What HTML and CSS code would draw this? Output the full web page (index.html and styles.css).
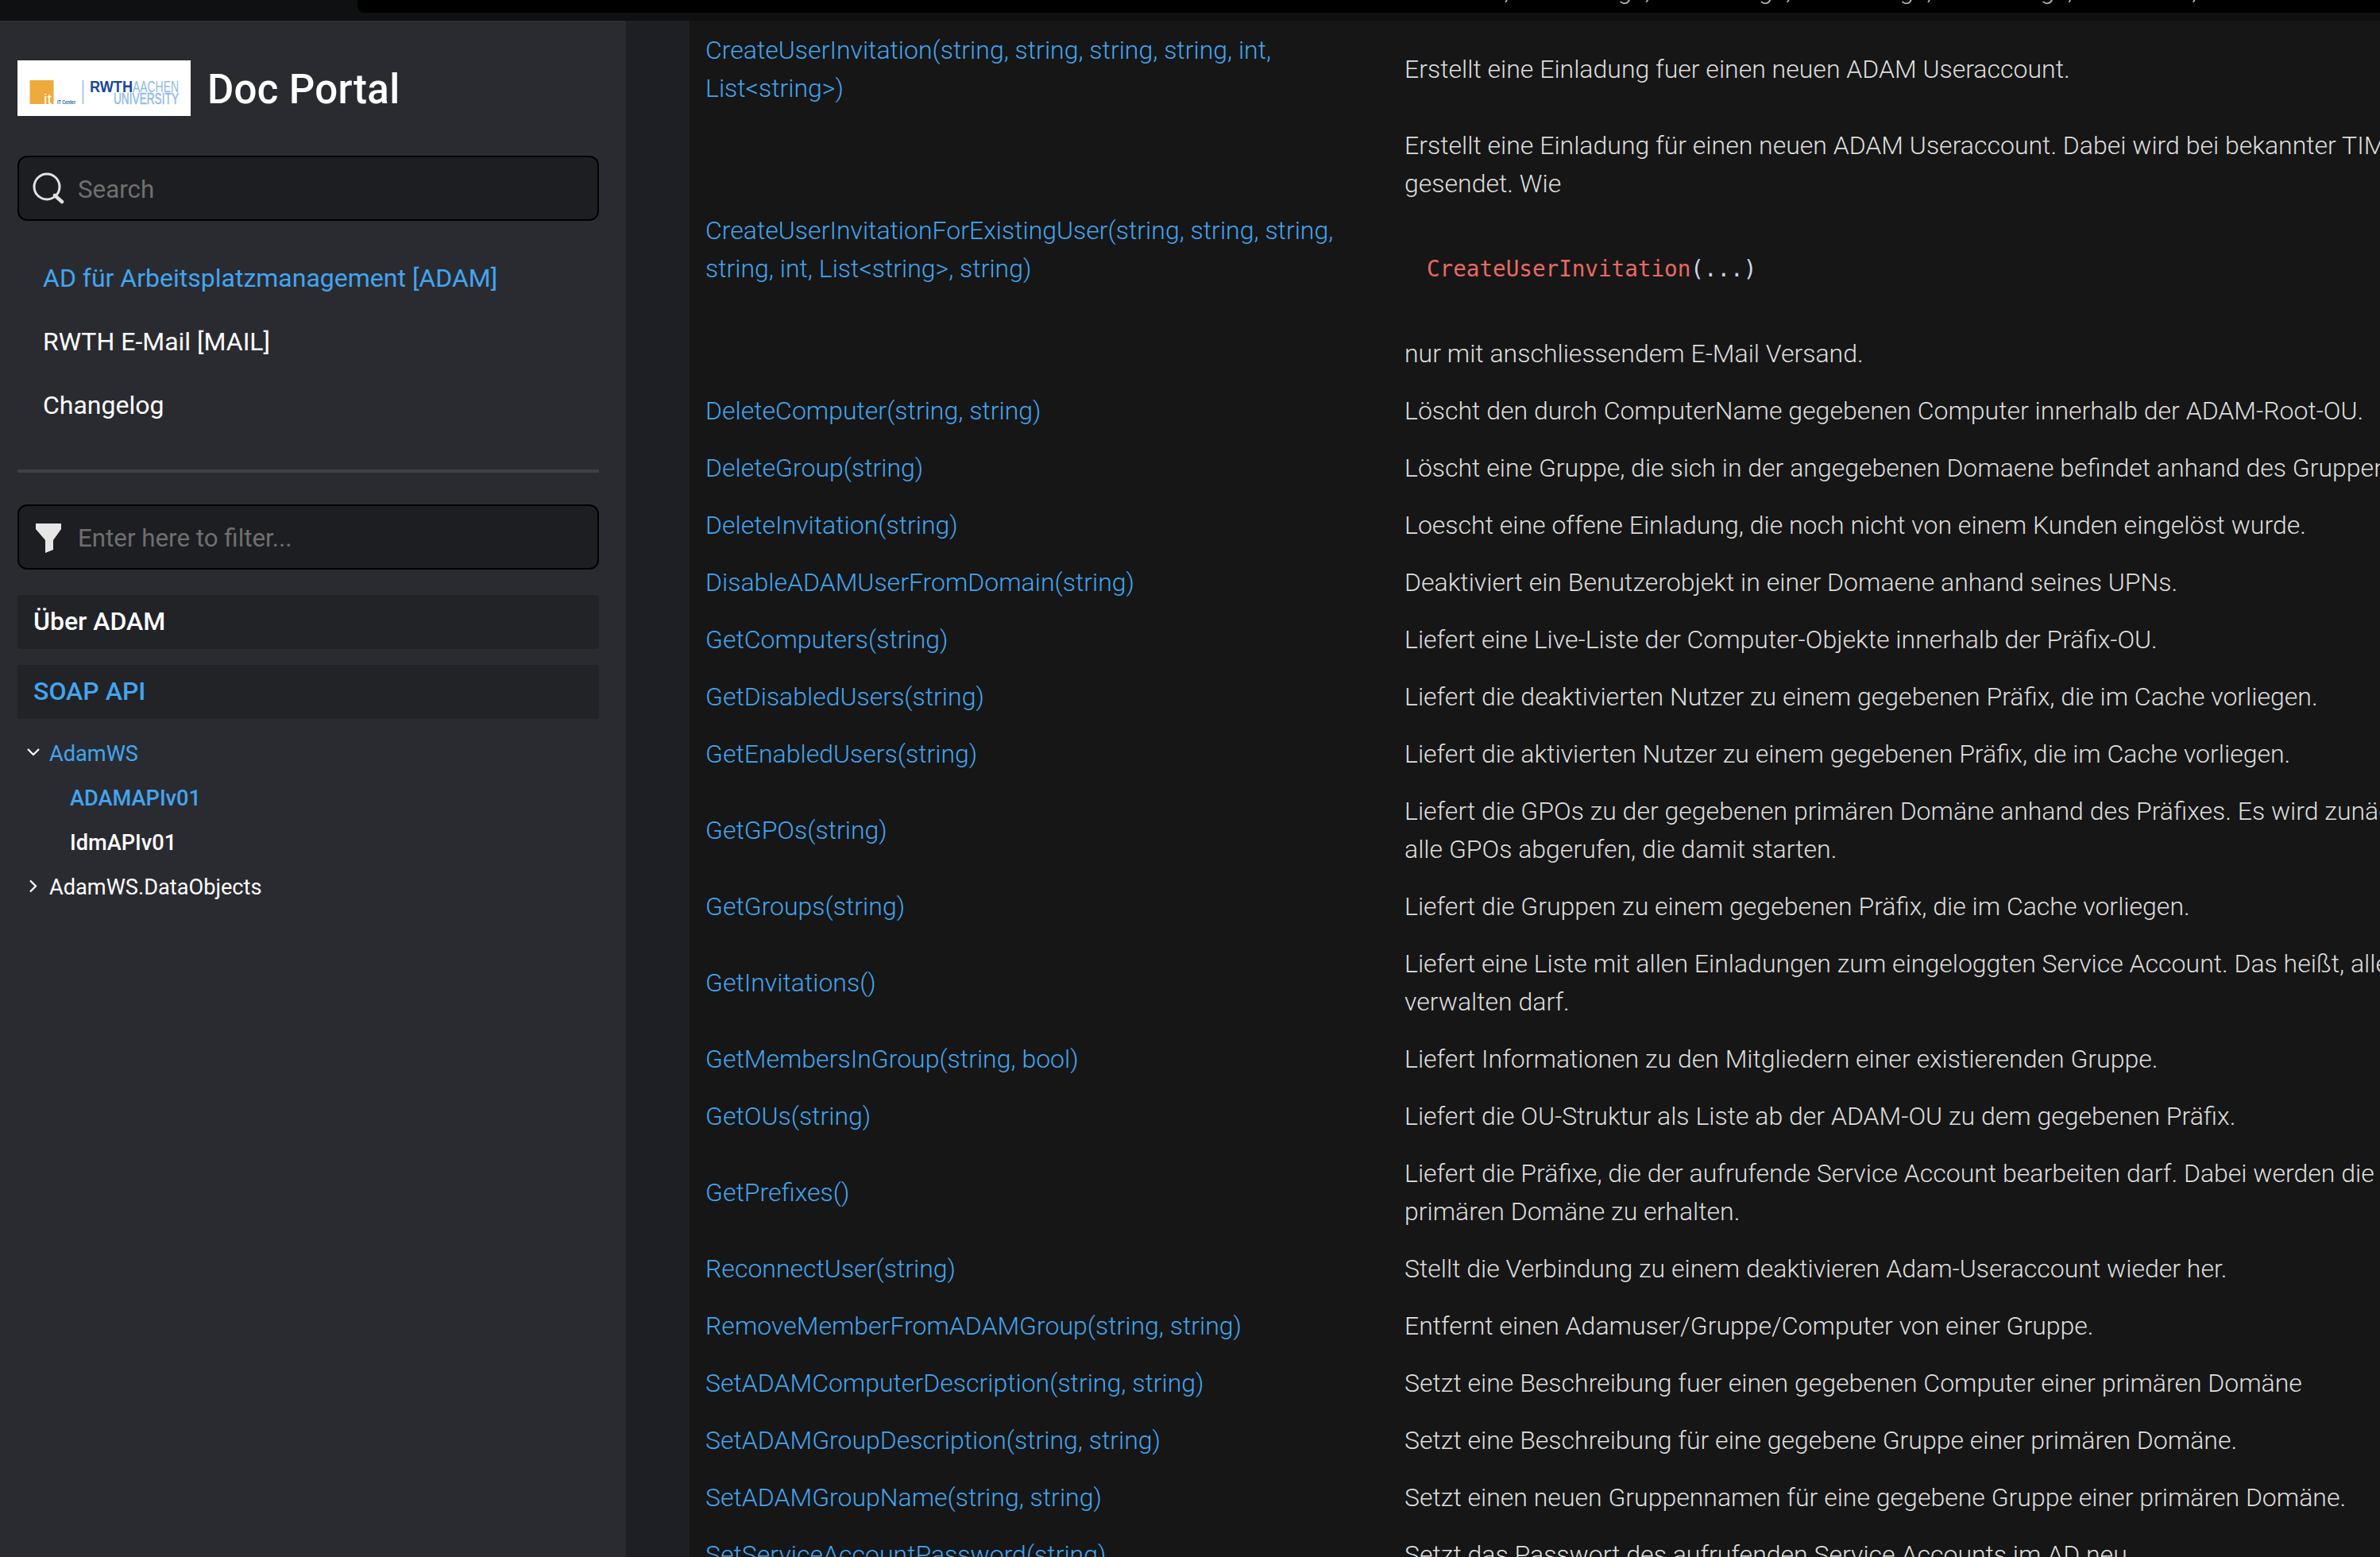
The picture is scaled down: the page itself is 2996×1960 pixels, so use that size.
FILE: index.html
```html
<!DOCTYPE html>
<html lang="de">
<head>
<meta charset="utf-8">
<title>Doc Portal</title>
<link rel="stylesheet" href="styles.css">
</head>
<body>
<header class="topbar">
  <div class="topbox"><div class="topbox-text">Hashtable, List&lt;string&gt;, List&lt;string&gt;, List&lt;string&gt;, List&lt;string&gt;, Hashtable,</div></div>
</header>
<div class="layout">
  <aside class="sidebar">
    <div class="brand">
      <svg class="logo" viewBox="0 0 218 70" role="img" aria-label="IT Center RWTH Aachen University">
        <rect width="218" height="70" fill="#fff"/>
        <rect x="15.5" y="25" width="30" height="30" fill="#ecab3a"/>
        <text class="logo-it" x="33" y="55" textLength="10" lengthAdjust="spacingAndGlyphs">it</text>
        <text class="logo-center" x="50" y="55" textLength="23" lengthAdjust="spacingAndGlyphs">IT Center</text>
        <rect x="82" y="25" width="1" height="30" fill="#6f9fd8"/>
        <text class="logo-rwth" x="91" y="40" textLength="54" lengthAdjust="spacingAndGlyphs">RWTH</text>
        <text class="logo-light" x="145" y="40" textLength="58" lengthAdjust="spacingAndGlyphs">AACHEN</text>
        <text class="logo-light logo-heavy" x="121" y="55" textLength="82" lengthAdjust="spacingAndGlyphs">UNIVERSITY</text>
      </svg>
      <span class="brand-name">Doc Portal</span>
    </div>
    <label class="field">
      <svg class="field-icon" viewBox="0 0 40 40"><circle cx="18" cy="18" r="16" fill="none" stroke="#e2e2e2" stroke-width="3"/><path d="M28 29l9 8" fill="none" stroke="#e2e2e2" stroke-width="4.5" stroke-linecap="round"/></svg>
      <input class="field-input" placeholder="Search">
    </label>
    <nav class="nav">
      <a class="nav-link active">AD für Arbeitsplatzmanagement [ADAM]</a>
      <a class="nav-link">RWTH E-Mail [MAIL]</a>
      <a class="nav-link">Changelog</a>
    </nav>
    <hr class="divider">
    <label class="field">
      <svg class="field-icon" viewBox="0 0 40 40"><path d="M4 3h32v7L26 24v12l-10 4V24L4 10z" fill="#e6e6e6"/></svg>
      <input class="field-input" placeholder="Enter here to filter...">
    </label>
    <div class="section">Über ADAM</div>
    <div class="section active">SOAP API</div>
    <ul class="tree">
      <li class="tree-row active"><svg class="chev" viewBox="0 0 20 20"><path d="M3 6l7 7 7-7" fill="none" stroke="#fff" stroke-width="2.2"/></svg>AdamWS</li>
      <li class="tree-row child active">ADAMAPIv01</li>
      <li class="tree-row child">IdmAPIv01</li>
      <li class="tree-row"><svg class="chev" viewBox="0 0 20 20"><path d="M6 3.5l7 7-7 7" fill="none" stroke="#fff" stroke-width="2.2"/></svg>AdamWS.DataObjects</li>
    </ul>
  </aside>
  <div class="gutter"></div>
  <main class="content">
    <table class="api">
      <tbody>
        <tr><td><a>CreateUserInvitation(string, string, string, string, int,<br>List&lt;string&gt;)</a></td><td>Erstellt eine Einladung fuer einen neuen ADAM Useraccount.</td></tr>
        <tr><td><a>CreateUserInvitationForExistingUser(string, string, string,<br>string, int, List&lt;string&gt;, string)</a></td><td>Erstellt eine Einladung für einen neuen ADAM Useraccount. Dabei wird bei bekannter TIM<br>gesendet. Wie<pre class="code"><span class="fn">CreateUserInvitation</span>(...)</pre>nur mit anschliessendem E-Mail Versand.</td></tr>
        <tr><td><a>DeleteComputer(string, string)</a></td><td>Löscht den durch ComputerName gegebenen Computer innerhalb der ADAM-Root-OU.</td></tr>
        <tr><td><a>DeleteGroup(string)</a></td><td>Löscht eine Gruppe, die sich in der angegebenen Domaene befindet anhand des Gruppennamens.</td></tr>
        <tr><td><a>DeleteInvitation(string)</a></td><td>Loescht eine offene Einladung, die noch nicht von einem Kunden eingelöst wurde.</td></tr>
        <tr><td><a>DisableADAMUserFromDomain(string)</a></td><td>Deaktiviert ein Benutzerobjekt in einer Domaene anhand seines UPNs.</td></tr>
        <tr><td><a>GetComputers(string)</a></td><td>Liefert eine Live-Liste der Computer-Objekte innerhalb der Präfix-OU.</td></tr>
        <tr><td><a>GetDisabledUsers(string)</a></td><td>Liefert die deaktivierten Nutzer zu einem gegebenen Präfix, die im Cache vorliegen.</td></tr>
        <tr><td><a>GetEnabledUsers(string)</a></td><td>Liefert die aktivierten Nutzer zu einem gegebenen Präfix, die im Cache vorliegen.</td></tr>
        <tr><td><a>GetGPOs(string)</a></td><td>Liefert die GPOs zu der gegebenen primären Domäne anhand des Präfixes. Es wird zunächst<br>alle GPOs abgerufen, die damit starten.</td></tr>
        <tr><td><a>GetGroups(string)</a></td><td>Liefert die Gruppen zu einem gegebenen Präfix, die im Cache vorliegen.</td></tr>
        <tr><td><a>GetInvitations()</a></td><td>Liefert eine Liste mit allen Einladungen zum eingeloggten Service Account. Das heißt, alle<br>verwalten darf.</td></tr>
        <tr><td><a>GetMembersInGroup(string, bool)</a></td><td>Liefert Informationen zu den Mitgliedern einer existierenden Gruppe.</td></tr>
        <tr><td><a>GetOUs(string)</a></td><td>Liefert die OU-Struktur als Liste ab der ADAM-OU zu dem gegebenen Präfix.</td></tr>
        <tr><td><a>GetPrefixes()</a></td><td>Liefert die Präfixe, die der aufrufende Service Account bearbeiten darf. Dabei werden die<br>primären Domäne zu erhalten.</td></tr>
        <tr><td><a>ReconnectUser(string)</a></td><td>Stellt die Verbindung zu einem deaktivieren Adam-Useraccount wieder her.</td></tr>
        <tr><td><a>RemoveMemberFromADAMGroup(string, string)</a></td><td>Entfernt einen Adamuser/Gruppe/Computer von einer Gruppe.</td></tr>
        <tr><td><a>SetADAMComputerDescription(string, string)</a></td><td>Setzt eine Beschreibung fuer einen gegebenen Computer einer primären Domäne</td></tr>
        <tr><td><a>SetADAMGroupDescription(string, string)</a></td><td>Setzt eine Beschreibung für eine gegebene Gruppe einer primären Domäne.</td></tr>
        <tr><td><a>SetADAMGroupName(string, string)</a></td><td>Setzt einen neuen Gruppennamen für eine gegebene Gruppe einer primären Domäne.</td></tr>
        <tr><td><a>SetServiceAccountPassword(string)</a></td><td>Setzt das Passwort des aufrufenden Service Accounts im AD neu.</td></tr>
      </tbody>
    </table>
  </main>
</div>
</body>
</html>
```
FILE: styles.css
```css
* { box-sizing: border-box; }
html, body { margin: 0; height: 100%; }
body {
  width: 2996px;
  height: 1960px;
  overflow: hidden;
  background: #0f1011;
  font-family: Roboto, "Liberation Sans", sans-serif;
  font-size: 32px;
  color: #fff;
  display: flex;
  flex-direction: column;
}
.topbar { height: 26px; flex: none; padding-left: 450px; background: #0f1011; }
.topbox { height: 16px; background: #000; border-bottom-left-radius: 8px; overflow: hidden; }
.topbox-text {
  margin: -36px 0 0 1301px;
  font-size: 32px;
  line-height: 48px;
  font-weight: 300;
  color: #bbb;
  white-space: nowrap;
}
.layout { flex: 1; display: flex; min-height: 0; }

.sidebar { width: 788px; flex: none; background: #2a2b30; padding: 50px 34px 0 22px; }
.brand { display: flex; align-items: center; gap: 21px; height: 70px; }
.logo { width: 218px; height: 70px; display: block; }
.logo text { font-family: "Liberation Sans", sans-serif; }
.logo-it { font-size: 18px; fill: #fff; font-weight: 400; }
.logo-center { font-size: 7px; fill: #1f5fa8; font-weight: 700; }
.logo-rwth { font-size: 21px; fill: #17479e; font-weight: 700; }
.logo-light { font-size: 21px; fill: #8ebae5; font-weight: 400; }
.logo-heavy { stroke: #8ebae5; stroke-width: 0.5px; }
.brand-name { font-size: 51px; font-weight: 500; letter-spacing: 0.3px; padding-top: 2px; }

.field {
  display: flex;
  align-items: center;
  height: 82px;
  margin-top: 50px;
  padding-left: 17px;
  background: #1d1e22;
  border: 2px solid #000;
  border-radius: 12px;
}
.field-icon { width: 40px; height: 40px; flex: none; }
.field-input {
  flex: 1;
  min-width: 0;
  height: 46px;
  margin: 3px 0 0 17px;
  padding: 0;
  border: 0;
  outline: 0;
  background: transparent;
  color: #fff;
  font: 400 31.3px Roboto, sans-serif;
}
.field-input::placeholder { color: #6f6f6f; opacity: 1; }

.nav { margin-top: 32px; }
.nav-link { display: block; height: 80px; line-height: 80px; padding-left: 32px; color: #fff; }
.nav-link.active { color: #42a5f0; }
.divider { height: 4px; margin: 41px 0 40px; border: 0; background: #3f4045; }
.divider + .field { margin-top: 0; }

.section {
  height: 68px;
  line-height: 66px;
  margin-top: 20px;
  padding-left: 20px;
  background: #222327;
  border-radius: 4px;
  font-weight: 500;
}
.field + .section { margin-top: 32px; }
.section.active { color: #42a5f0; }

.tree { list-style: none; margin: 16px 0 0; padding: 0; font-size: 27.2px; }
.tree-row { display: flex; align-items: center; height: 56px; padding-left: 40px; position: relative; }
.tree-row.active { color: #42a5f0; }
.tree-row.child { padding-left: 66px; font-weight: 500; }
.chev { position: absolute; left: 10px; top: 16px; width: 20px; height: 20px; }

.gutter { width: 80px; flex: none; background: #1e1f24; }
.content { flex: 1; min-width: 0; background: #161616; overflow: hidden; }
.api { border-collapse: collapse; table-layout: fixed; width: 2400px; margin-top: 1px; font-weight: 300; line-height: 48px; }
.api td { padding: 12px 20px; vertical-align: middle; color: #dedede; white-space: nowrap; }
.api td:first-child { width: 880px; }
.api a { color: #42a5f0; }
.code { margin: 48px 0 0; padding: 12px 28px 58px; font: 400 27.6px/48px "DejaVu Sans Mono", monospace; color: #c9d7e8; }
.fn { color: #ea6962; }
```
